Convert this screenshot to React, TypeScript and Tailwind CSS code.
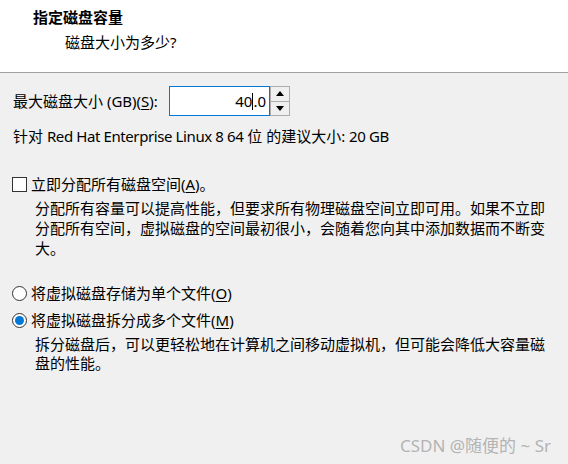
import React from "react";

const font = "font-['Noto_Sans','Noto_Sans_CJK_SC',sans-serif]";

function Key({ k }: { k: string }) {
  return <span className="underline underline-offset-2">{k}</span>;
}

function SpinBox() {
  return (
    <div className="flex h-[30px]">
      <div className="relative flex w-[101px] items-center justify-end border border-[#0078d7] bg-white pr-[3px] text-[15px] text-black">
        <span>40</span>
        <span className="h-[17px] w-px bg-black" />
        <span>.0</span>
      </div>
      <div className="flex w-[20px] flex-col border border-[#adadad] bg-[#f0f0f0]">
        <div className="flex flex-1 items-center justify-center border-b border-[#adadad]">
          <svg width="8" height="5" viewBox="0 0 8 5">
            <path d="M0 5 L4 0 L8 5 Z" fill="#000" />
          </svg>
        </div>
        <div className="flex flex-1 items-center justify-center">
          <svg width="8" height="5" viewBox="0 0 8 5">
            <path d="M0 0 L8 0 L4 5 Z" fill="#000" />
          </svg>
        </div>
      </div>
    </div>
  );
}

function Radio({ checked }: { checked?: boolean }) {
  return (
    <span className="flex h-[15px] w-[15px] items-center justify-center rounded-full border border-[#333] bg-white">
      {checked && <span className="h-[9px] w-[9px] rounded-full bg-[#0078d7]" />}
    </span>
  );
}

export default function App() {
  return (
    <div className={`relative h-[464px] w-[568px] overflow-hidden bg-[#f0f0f0] text-[15px] text-black ${font}`}>
      {/* Header */}
      <div className="h-[73px] border-b border-[#a0a0a0] bg-white pt-[7px]">
        <div className="pl-[33px] font-bold leading-[20px]">指定磁盘容量</div>
        <div className="mt-[5px] pl-[65px] leading-[20px]">磁盘大小为多少?</div>
      </div>

      <div className="px-[13px]">
        {/* Size row */}
        <div className="mt-[13px] flex items-center">
          <span className="w-[156px] leading-[20px]">
            最大磁盘大小 (GB)(<Key k="S" />):
          </span>
          <SpinBox />
        </div>
        <div className="mt-[10px] leading-[20px]">
          针对 <span className="tracking-[-0.4px]">Red Hat Enterprise Linux 8 64</span> 位 的建议大小:{" "}
          <span className="tracking-[-0.4px]">20 GB</span>
        </div>

        {/* Allocate */}
        <div className="-ml-px mt-[28px] flex items-center gap-[4px] leading-[20px]">
          <span className="h-[15px] w-[15px] border border-[#333] bg-white" />
          <span>
            立即分配所有磁盘空间(<Key k="A" />)。
          </span>
        </div>
        <div className="mt-[4px] whitespace-nowrap pl-[22px] leading-[20px]">
          <div>分配所有容量可以提高性能，但要求所有物理磁盘空间立即可用。如果不立即</div>
          <div>分配所有空间，虚拟磁盘的空间最初很小，会随着您向其中添加数据而不断变</div>
          <div>大。</div>
        </div>

        {/* Files */}
        <div className="-ml-px mt-[25px] flex items-center gap-[4px] leading-[20px]">
          <Radio />
          <span>
            将虚拟磁盘存储为单个文件(<Key k="O" />)
          </span>
        </div>
        <div className="-ml-px mt-[7px] flex items-center gap-[4px] leading-[20px]">
          <Radio checked />
          <span>
            将虚拟磁盘拆分成多个文件(<Key k="M" />)
          </span>
        </div>
        <div className="mt-[5px] whitespace-nowrap pl-[22px] leading-[19px]">
          <div>拆分磁盘后，可以更轻松地在计算机之间移动虚拟机，但可能会降低大容量磁</div>
          <div>盘的性能。</div>
        </div>
      </div>

      <div className="absolute bottom-[8px] right-[17px] text-[17px] leading-[20px] text-[#b4b4b4]">
        CSDN @随便的 ~ Sr
      </div>
    </div>
  );
}
